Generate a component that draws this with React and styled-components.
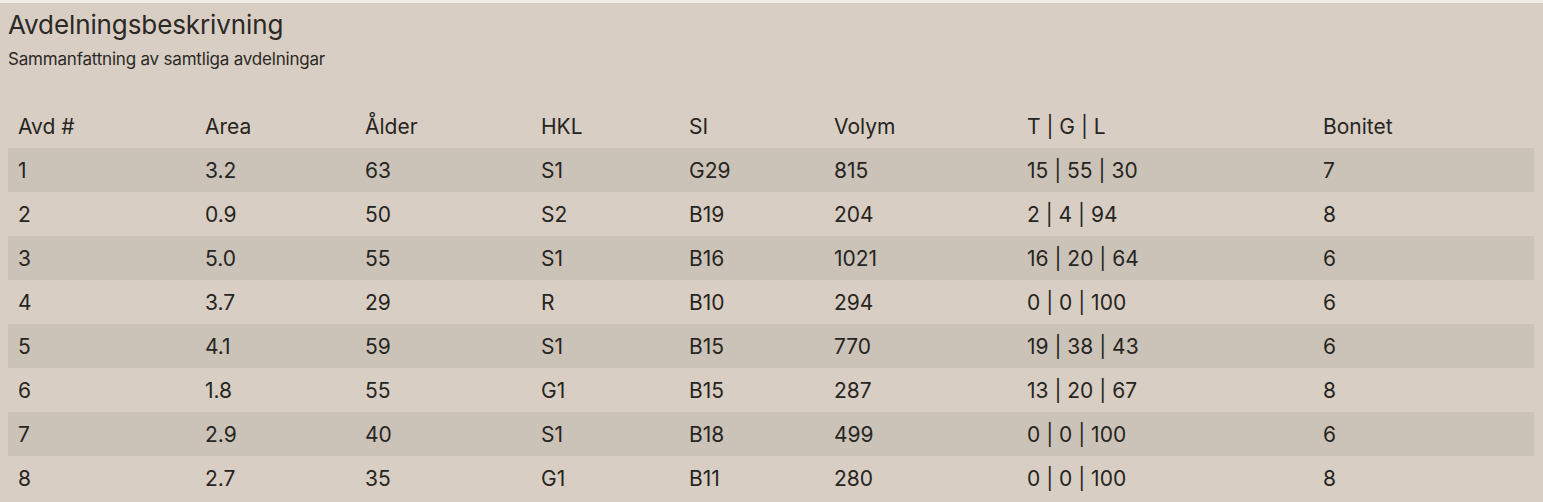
import React from "react";
import styled, { createGlobalStyle } from "styled-components";

const Global = createGlobalStyle`
  html, body { margin: 0; padding: 0; background: #efebe6; }
  body { font-family: Inter, "Liberation Sans", sans-serif; color: #262522; }
`;

const Panel = styled.section`
  margin-top: 3px;
  background: #d9cec3;
  padding: 6px 9px 2px 8px;
  min-height: 499px;
  box-sizing: border-box;
`;

const Title = styled.h1`
  margin: 0;
  font-size: 26px;
  font-weight: 400;
  line-height: 32px;
  letter-spacing: -0.1px;
  color: #2a2926;
`;

const Subtitle = styled.p`
  margin: 7px 0 0;
  font-size: 17px;
  line-height: 22px;
  letter-spacing: -0.2px;
  color: #2a2926;
`;

const Table = styled.table`
  margin-top: 34px;
  width: 100%;
  border-collapse: collapse;
  table-layout: fixed;
`;

const Col = styled.col`
  width: ${(p) => p.$w}px;
`;

const HeadCell = styled.th`
  text-align: left;
  font-weight: 400;
  font-size: 21px;
  height: 44px;
  padding: 0 10px;
  letter-spacing: 0;
`;

const Row = styled.tr`
  background: ${(p) => (p.$striped ? "#ccc3b8" : "transparent")};
`;

const Cell = styled.td`
  font-size: 21px;
  height: 44px;
  padding: 0 10px;
  letter-spacing: 0;
`;

const cols = [187, 160, 176, 148, 145, 193, 296, 221];
const headers = ["Avd #", "Area", "Ålder", "HKL", "SI", "Volym", "T | G | L", "Bonitet"];
const rows = [
  ["1", "3.2", "63", "S1", "G29", "815", "15 | 55 | 30", "7"],
  ["2", "0.9", "50", "S2", "B19", "204", "2 | 4 | 94", "8"],
  ["3", "5.0", "55", "S1", "B16", "1021", "16 | 20 | 64", "6"],
  ["4", "3.7", "29", "R", "B10", "294", "0 | 0 | 100", "6"],
  ["5", "4.1", "59", "S1", "B15", "770", "19 | 38 | 43", "6"],
  ["6", "1.8", "55", "G1", "B15", "287", "13 | 20 | 67", "8"],
  ["7", "2.9", "40", "S1", "B18", "499", "0 | 0 | 100", "6"],
  ["8", "2.7", "35", "G1", "B11", "280", "0 | 0 | 100", "8"],
];

export default function App() {
  return (
    <>
      <Global />
      <Panel>
        <Title>Avdelningsbeskrivning</Title>
        <Subtitle>Sammanfattning av samtliga avdelningar</Subtitle>
        <Table>
          <colgroup>
            {cols.map((w, i) => (
              <Col key={i} $w={w} />
            ))}
          </colgroup>
          <thead>
            <tr>
              {headers.map((h) => (
                <HeadCell key={h}>{h}</HeadCell>
              ))}
            </tr>
          </thead>
          <tbody>
            {rows.map((r, i) => (
              <Row key={i} $striped={i % 2 === 0}>
                {r.map((c, j) => (
                  <Cell key={j}>{c}</Cell>
                ))}
              </Row>
            ))}
          </tbody>
        </Table>
      </Panel>
    </>
  );
}
